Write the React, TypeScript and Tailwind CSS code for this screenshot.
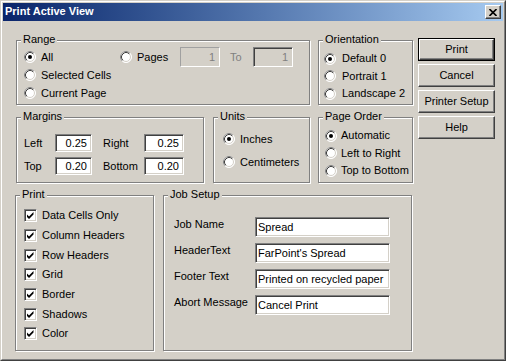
import type { JSX, ReactNode } from "react";

const font = { fontFamily: '"Liberation Sans", Arial, sans-serif' };

function Group({ title, className, children }: { title: string; className: string; children?: ReactNode }): JSX.Element {
    return (
        <div className={`relative shrink-0 border border-[#808080] shadow-[inset_1px_1px_0_#fff,1px_1px_0_#fff] ${className}`}>
            <span className="absolute left-[4px] top-[-8px] bg-[#d4d0c8] px-[2px] leading-[13px]">{title}</span>
            {children}
        </div>
    );
}

function RadioIcon({ checked }: { checked?: boolean }): JSX.Element {
    return (
        <svg width="12" height="12" viewBox="0 0 12 12" className="shrink-0">
            <circle cx="6" cy="6" r="5.5" fill="#fff" stroke="#fff" />
            <path d="M2.11 9.89 A5.5 5.5 0 0 1 9.89 2.11" fill="none" stroke="#808080" />
            <circle cx="6" cy="6" r="4.5" fill="#fff" stroke="#d4d0c8" />
            <path d="M2.82 9.18 A4.5 4.5 0 0 1 9.18 2.82" fill="none" stroke="#404040" />
            {checked && <circle cx="6" cy="6" r="2" fill="#000" />}
        </svg>
    );
}

function Radio({ label, checked, className = "h-[18px]", gap = "ml-[5px]" }: { label: string; checked?: boolean; className?: string; gap?: string }): JSX.Element {
    return (
        <div className={`flex items-center ${className}`}>
            <RadioIcon checked={checked} />
            <span className={`${gap} leading-[13px]`}>{label}</span>
        </div>
    );
}

function Check({ label }: { label: string }): JSX.Element {
    return (
        <div className="flex h-[19.67px] items-center">
            <div className="flex h-[13px] w-[13px] shrink-0 items-center justify-center border border-t-[#808080] border-l-[#808080] border-r-white border-b-white bg-white shadow-[inset_1px_1px_0_#404040,inset_-1px_-1px_0_#d4d0c8]">
                <svg width="9" height="9" viewBox="0 0 9 9">
                    <polygon points="1,3.5 3,5.5 7.5,1 7.5,3.5 3,8 1,6" fill="#000" />
                </svg>
            </div>
            <span className="ml-[5px] leading-[13px]">{label}</span>
        </div>
    );
}

function Field({ value, className, align = "right", disabled }: { value: string; className: string; align?: "left" | "right"; disabled?: boolean }): JSX.Element {
    const tone = disabled
        ? "bg-[#d4d0c8] text-[#808080] shadow-[inset_1px_1px_0_#d4d0c8,inset_-1px_-1px_0_#d4d0c8]"
        : "bg-white text-black shadow-[inset_1px_1px_0_#404040,inset_-1px_-1px_0_#d4d0c8]";
    return (
        <div
            className={`flex shrink-0 items-center border border-t-[#808080] border-l-[#808080] border-r-white border-b-white leading-[13px] ${tone} ${
                align === "right" ? "justify-end pr-[4px]" : "pl-[2px]"
            } ${className}`}
        >
            {value}
        </div>
    );
}

function Button({ label, primary }: { label: string; primary?: boolean }): JSX.Element {
    return (
        <div className={`h-[23px] w-[77px] ${primary ? "border border-black" : ""}`}>
            <div className="flex h-full w-full items-center justify-center border border-t-white border-l-white border-r-[#404040] border-b-[#404040] shadow-[inset_-1px_-1px_0_#808080] leading-[13px]">
                {label}
            </div>
        </div>
    );
}

export default function App(): JSX.Element {
    return (
        <div style={font} className="h-[361px] w-[506px] border border-t-[#d4d0c8] border-l-[#d4d0c8] border-r-[#404040] border-b-[#404040] bg-[#d4d0c8] text-[11px] text-black">
            <div className="h-full w-full border border-t-white border-l-white border-r-[#808080] border-b-[#808080] p-[1px]">
                {/* title bar */}
                <div className="flex h-[18px] items-start justify-between bg-gradient-to-r from-[#0a246a] to-[#a6caf0]">
                    <span className="ml-[2px] mt-[2px] text-[11px] font-bold leading-[13px] text-white">Print Active View</span>
                    <div className="mr-[2px] mt-[2px] flex h-[14px] w-[16px] items-center justify-center border border-t-white border-l-white border-r-[#404040] border-b-[#404040] bg-[#d4d0c8] shadow-[inset_-1px_-1px_0_#808080]">
                        <svg width="8" height="7" viewBox="0 0 8 7">
                            <path d="M0.5 0 L7.5 7 M7.5 0 L0.5 7" stroke="#000" strokeWidth="1.6" />
                        </svg>
                    </div>
                </div>

                <div className="flex">
                    <div className="w-[410px] shrink-0">
                        {/* row 1 */}
                        <div className="ml-[13px] mt-[19px] flex">
                            <Group title="Range" className="h-[65px] w-[294px] pl-[7px] pt-[7px]">
                                <div className="flex">
                                    <div className="w-[96px]">
                                        <Radio label="All" checked />
                                        <Radio label="Selected Cells" />
                                        <Radio label="Current Page" />
                                    </div>
                                    <div className="mt-[-1px] flex h-[20px] items-center">
                                        <RadioIcon />
                                        <span className="ml-[5px] w-[43px]">Pages</span>
                                        <Field value="1" disabled className="h-[20px] w-[40px] !border-t-[#a0a0a0] !border-l-[#a0a0a0]" />
                                        <span className="ml-[10px] w-[23px] text-[#808080]">To</span>
                                        <Field value="1" className="h-[20px] w-[40px] !bg-[#d4d0c8] !text-[#808080]" />
                                    </div>
                                </div>
                            </Group>
                            <Group title="Orientation" className="ml-[8px] h-[65px] w-[95px] pl-[5px] pt-[9px]">
                                <Radio label="Default 0" checked className="h-[17.5px]" gap="ml-[6px]" />
                                <Radio label="Portrait 1" className="h-[17.5px]" gap="ml-[6px]" />
                                <Radio label="Landscape 2" className="h-[17.5px]" gap="ml-[6px]" />
                            </Group>
                        </div>

                        {/* row 2 */}
                        <div className="ml-[13px] mt-[12px] flex">
                            <Group title="Margins" className="h-[66px] w-[188px] pl-[7px] pt-[16px]">
                                <div className="flex flex-col gap-[5px]">
                                    <div className="flex h-[18px] items-center">
                                        <span className="w-[31px]">Left</span>
                                        <Field value="0.25" className="h-[18px] w-[37px]" />
                                        <span className="ml-[11px] w-[41px]">Right</span>
                                        <Field value="0.25" className="h-[18px] w-[40px]" />
                                    </div>
                                    <div className="flex h-[18px] items-center">
                                        <span className="w-[31px]">Top</span>
                                        <Field value="0.20" className="h-[18px] w-[37px]" />
                                        <span className="ml-[11px] w-[41px]">Bottom</span>
                                        <Field value="0.20" className="h-[18px] w-[40px]" />
                                    </div>
                                </div>
                            </Group>
                            <Group title="Units" className="ml-[9px] h-[66px] w-[97px] pl-[9px] pt-[12px]">
                                <div className="flex flex-col gap-[5px]">
                                    <Radio label="Inches" checked />
                                    <Radio label="Centimeters" />
                                </div>
                            </Group>
                            <Group title="Page Order" className="ml-[8px] h-[66px] w-[95px] pl-[6px] pt-[9px]">
                                <Radio label="Automatic" checked className="h-[17.5px]" gap="ml-[4px]" />
                                <Radio label="Left to Right" className="h-[17.5px]" gap="ml-[4px]" />
                                <Radio label="Top to Bottom" className="h-[17.5px]" gap="ml-[4px]" />
                            </Group>
                        </div>

                        {/* row 3 */}
                        <div className="ml-[12px] mt-[12px] flex">
                            <Group title="Print" className="h-[156px] w-[139px] pl-[8px] pt-[10px]">
                                <Check label="Data Cells Only" />
                                <Check label="Column Headers" />
                                <Check label="Row Headers" />
                                <Check label="Grid" />
                                <Check label="Border" />
                                <Check label="Shadows" />
                                <Check label="Color" />
                            </Group>
                            <Group title="Job Setup" className="ml-[9px] h-[156px] w-[249px] pl-[10px] pt-[21px]">
                                <div className="flex flex-col gap-[6px]">
                                    {[
                                        ["Job Name", "Spread"],
                                        ["HeaderText", "FarPoint's Spread"],
                                        ["Footer Text", "Printed on recycled paper"],
                                        ["Abort Message", "Cancel Print"],
                                    ].map(([label, value]) => (
                                        <div key={label} className="flex items-start">
                                            <span className="mt-[1px] w-[81px] leading-[13px]">{label}</span>
                                            <Field value={value} align="left" className="h-[20px] w-[135px]" />
                                        </div>
                                    ))}
                                </div>
                            </Group>
                        </div>
                    </div>

                    {/* buttons */}
                    <div className="ml-[5px] mt-[17px] flex flex-col gap-[3px]">
                        <Button label="Print" primary />
                        <Button label="Cancel" />
                        <Button label="Printer Setup" />
                        <Button label="Help" />
                    </div>
                </div>
            </div>
        </div>
    );
}
